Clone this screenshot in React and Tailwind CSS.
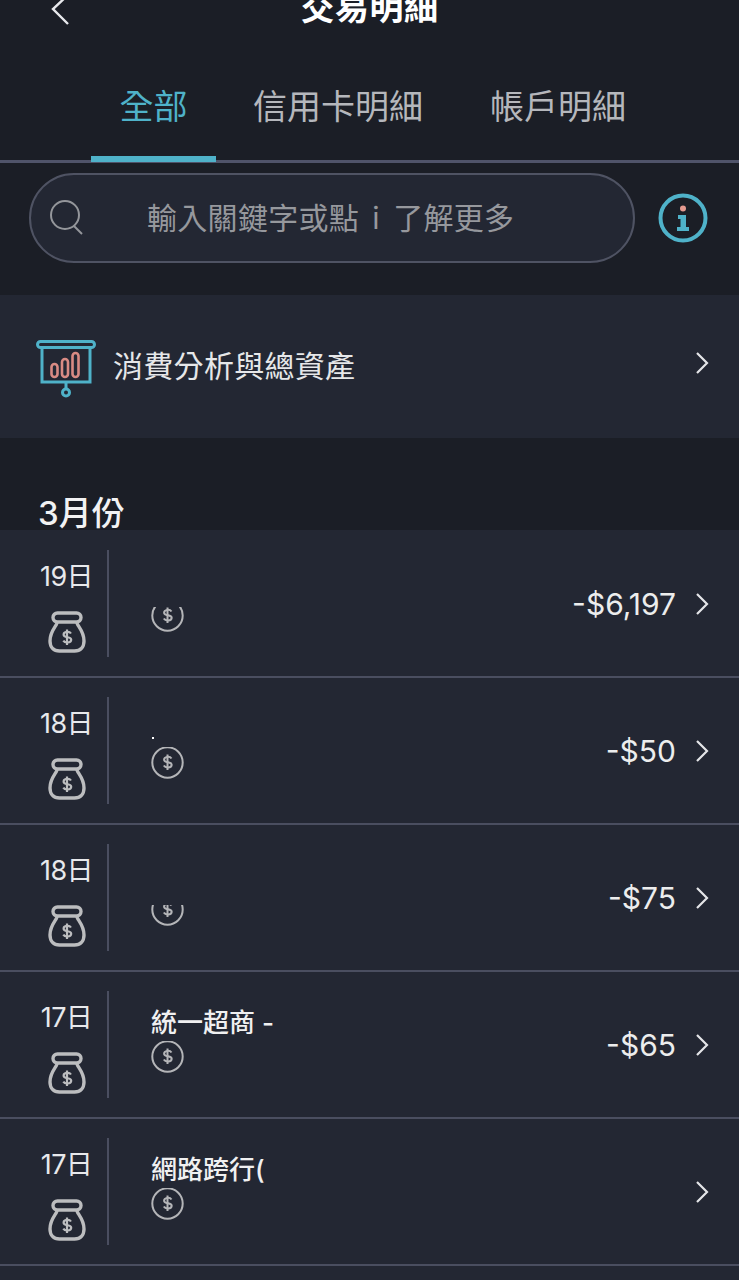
const CJK = "font-['Inter','Noto_Sans_CJK_TC',sans-serif]";

const ROWS = [
  { day: '19日', amount: '-$6,197', clip: 25 },
  { day: '18日', amount: '-$50', clip: 32, dot: true },
  { day: '18日', amount: '-$75', clip: 21 },
  { day: '17日', amount: '-$65', clip: 32, name: '統一超商 -' },
  { day: '17日', name: '網路跨行(', clip: 32 },
];

function Chevron({ className = '' }) {
  return (
    <svg width="14" height="24" viewBox="0 0 14 24" fill="none" stroke="#e4e5e8" strokeWidth="2.2" className={className}>
      <path d="M2 2l10 10L2 22" />
    </svg>
  );
}

function DollarSign() {
  return (
    <>
      <path d="M20.5 12.5c-.8-1.2-2.500-1.800-4.200-1.600-1.900.2-3.200 1.200-3.200 2.800 0 3.600 7.600 1.600 7.600 5 0 1.600-1.500 2.700-3.600 2.800-1.900.1-3.500-.6-4.300-1.900" />
      <path d="M16.500 8.500v15.500" />
    </>
  );
}

function Coin() {
  return (
    <svg width="33" height="33" viewBox="0 0 33 33" fill="none" stroke="#b4b5b8" strokeWidth="2" className="shrink-0">
      <circle cx="16.500" cy="16.500" r="15.200" />
      <DollarSign />
    </svg>
  );
}

function Bag() {
  return (
    <svg width="38" height="42" viewBox="0 0 38 42" fill="none" stroke="#bcbdbf" className="shrink-0">
      <rect x="5" y="2" width="28" height="9" rx="4.500" strokeWidth="3.400" />
      <path d="M9 11c1 3-7 8-7 19 0 6 3.500 10 9.500 10h15c6 0 9.500-4 9.500-10 0-11-8-16-7-19" strokeWidth="3.400" />
      <g transform="translate(2.500 10)" strokeWidth="2.200">
        <DollarSign />
      </g>
    </svg>
  );
}

function BoardIcon() {
  return (
    <svg width="60" height="58" viewBox="0 0 60 58" fill="none" className="shrink-0">
      <rect x="1.500" y="1.500" width="57" height="6" rx="3" stroke="#4fb2c9" strokeWidth="3" />
      <path d="M6 8v34h48V8M30 42v7" stroke="#4fb2c9" strokeWidth="3" />
      <circle cx="30" cy="52.500" r="3.500" stroke="#4fb2c9" strokeWidth="3" />
      <rect x="15.500" y="24" width="6" height="13" rx="3" stroke="#d98b84" strokeWidth="2.600" />
      <rect x="26" y="19" width="6" height="18" rx="3" stroke="#d98b84" strokeWidth="2.600" />
      <rect x="36.500" y="13" width="6" height="24" rx="3" stroke="#d98b84" strokeWidth="2.600" />
    </svg>
  );
}

function InfoIcon() {
  return (
    <svg width="50" height="50" viewBox="0 0 50 50" fill="none" className="shrink-0">
      <circle cx="25" cy="25" r="22.500" stroke="#4fb2c9" strokeWidth="4" />
      <circle cx="25" cy="15.500" r="3" fill="#e59a90" />
      <path d="M20 22h8v12h3v4H19v-4h3.500v-8H20z" fill="#4fb2c9" />
    </svg>
  );
}

function Row({ day, amount, name, clip, dot }) {
  return (
    <div className="flex h-[147px] items-stretch border-b-2 border-[#4a4e60]">
      <div className="mt-[19px] flex h-[107px] w-[109px] shrink-0 flex-col items-center border-r-2 border-[#4a4e60] pl-[26px]">
        <span className="mt-[11px] text-[27px] leading-[32px] tracking-[-0.6px] text-[#e8e9ec]">{day}</span>
        <div className="mt-[18px]">
          <Bag />
        </div>
      </div>
      <div className="ml-[42px] flex w-[122px] shrink-0 flex-col pt-[51px]">
        <div className="relative h-[18px]">
          {name && (
            <div className="-mt-[15px] w-[130px] whitespace-nowrap text-[26px] font-medium leading-[30px] text-[#f0f0f1]">
              {name}
            </div>
          )}
          {dot && <div className="absolute left-[1px] top-[8px] h-[2px] w-[2px] bg-white" />}
        </div>
        <div className="flex items-end overflow-hidden" style={{ height: clip, marginTop: 32 - clip }}>
          <Coin />
        </div>
      </div>
      <div className="flex flex-1 items-center justify-end pr-[30px]">
        {amount && <span className="mr-[19px] text-[30px] leading-[36px] text-[#eceded]">{amount}</span>}
        <Chevron />
      </div>
    </div>
  );
}

export default function App() {
  return (
    <div className={`h-[1280px] w-[739px] overflow-hidden bg-[#1b1e26] ${CJK}`}>
      <div className="h-[26px] overflow-hidden">
        <div className="-mt-[9px] grid h-[35px] grid-cols-[1fr_auto_1fr] items-start">
          <svg width="20" height="34" viewBox="0 0 20 34" fill="none" stroke="#e8e9ec" strokeWidth="2.400" className="ml-[50px] mt-[2px]">
            <path d="M18 2L3 16l15 15" />
          </svg>
          <span className="text-[34px] font-bold leading-[34px] tracking-[0.5px] text-white">交易明細</span>
          <span />
        </div>
      </div>

      <div className="flex h-[137px] items-end border-b-[3px] border-[#50546a] pl-[91px]">
        <div className="-mb-[2px] h-[72px] w-[125px] border-b-[6px] border-[#4fb2c9] text-center text-[34px] leading-[34px] text-[#4fb2c9]">
          全部
        </div>
        <div className="ml-[37px] h-[70px] text-[34px] leading-[34px] text-[#b5b7bc]">信用卡明細</div>
        <div className="ml-[67px] h-[70px] text-[34px] leading-[34px] text-[#b5b7bc]">帳戶明細</div>
      </div>

      <div className="mt-[10px] flex items-center pl-[29px]">
        <div className="flex h-[90px] w-[606px] items-center rounded-full border-2 border-[#4f5363] bg-[#232733] pl-[18px]">
          <svg width="36" height="36" viewBox="0 0 36 36" fill="none" stroke="#94969b" strokeWidth="2">
            <circle cx="16" cy="15" r="14" />
            <path d="M25 26l8 8" />
          </svg>
          <span className="ml-[62px] whitespace-nowrap text-[30px] leading-[36px] tracking-[0.3px] text-[#96989d] [word-spacing:4.500px]">
            輸入關鍵字或點 i 了解更多
          </span>
        </div>
        <div className="ml-[23px]">
          <InfoIcon />
        </div>
      </div>

      <div className="mt-[32px] flex h-[143px] items-center bg-[#232733] pl-[36px] pr-[30px]">
        <div className="mt-[4px]">
          <BoardIcon />
        </div>
        <span className="-mt-[2px] ml-[17px] flex-1 text-[30px] leading-[40px] tracking-[0.3px] text-[#e6e7e9]">消費分析與總資產</span>
        <Chevron className="-mt-[7px]" />
      </div>

      <div className="h-[92px] overflow-hidden pl-[38px] pt-[55px] text-[33px] font-medium leading-[40px] text-[#f2f2f3]">
        3月份
      </div>

      <div className="h-[750px] bg-[#232733] pt-px">
        {ROWS.map((r, i) => (
          <Row key={i} {...r} />
        ))}
      </div>
    </div>
  );
}
